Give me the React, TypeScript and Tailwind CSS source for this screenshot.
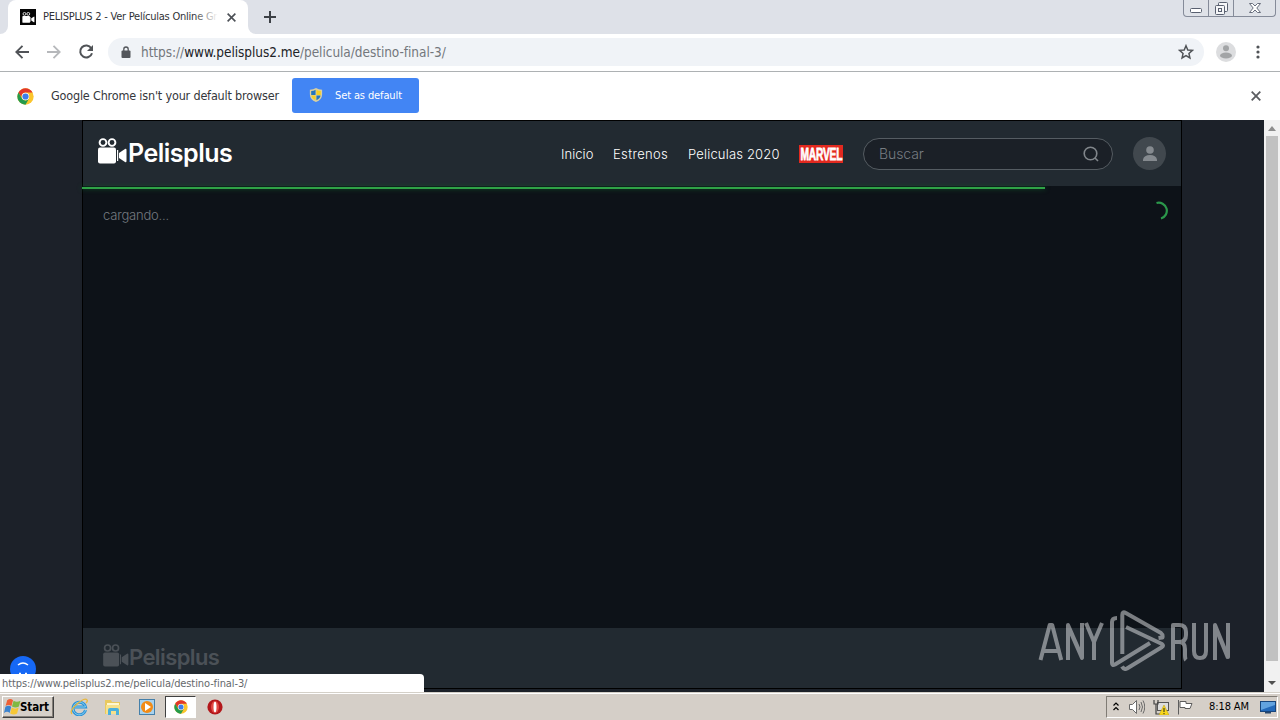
import * as React from "react";
import clsx from "clsx";

const PAGE_URL = "/pelicula/destino-final-3/";

const navLinks = [
  { label: "Inicio", className: "w-[32px] tracking-[0.05px]" },
  { label: "Estrenos", className: "w-[55px] tracking-[0.35px]" },
  { label: "Peliculas 2020", className: "w-[91px] tracking-[0.18px]" },
];

function CameraLogo({ className }: { className?: string }) {
  return (
    <svg viewBox="0 0 29 26" className={className} fill="currentColor">
      <circle cx="5" cy="4.5" r="3.4" fill="none" stroke="currentColor" strokeWidth="1.9" />
      <circle cx="14" cy="4.5" r="3.4" fill="none" stroke="currentColor" strokeWidth="1.9" />
      <rect x="0" y="9.5" width="18" height="16" rx="2" />
      <path d="M19 12h1.200v11H19zM21 15l6-4q1.500-.7 1.500 1v11q0 1.700-1.500 1l-6-4z" />
    </svg>
  );
}

function ChromeLogo({ className }: { className?: string }) {
  return (
    <svg viewBox="0 0 48 48" className={className}>
      <circle cx="24" cy="24" r="23" fill="#fbc52d" />
      <path d="M4.100 12.500A23 23 0 0 1 43.900 12.500H24A11.500 11.500 0 0 0 14 29.800Z" fill="#e2372b" />
      <path d="M4.100 12.500A23 23 0 0 0 24 47L34 29.800A11.500 11.500 0 0 1 14 29.800Z" fill="#249b4c" />
      <circle cx="24" cy="24" r="10.500" fill="#fff" />
      <circle cx="24" cy="24" r="8.800" fill="#3d7ce9" />
    </svg>
  );
}

function CloseIcon({ className }: { className?: string }) {
  return (
    <svg viewBox="0 0 10 10" className={className} fill="none" stroke="currentColor" strokeWidth="1.8">
      <path d="m.7.7 8.600 8.600M9.300.7.700 9.300" />
    </svg>
  );
}

function WindowControls() {
  return (
    <div className="flex h-[17px] w-[93px] rounded-b border border-t-0 border-[#858b99] bg-[#dfe2e8] text-[#596070]">
      <div className="flex w-[25px] justify-center border-r border-[#858b99] pt-2">
        <svg viewBox="0 0 12 5" className="h-[5px] w-3" fill="#fff" stroke="currentColor">
          <rect x=".5" y=".5" width="11" height="4" rx="1" />
        </svg>
      </div>
      <div className="flex w-[25px] justify-center border-r border-[#858b99] pt-0.5">
        <svg viewBox="0 0 13 13" className="size-[13px]" fill="#f5f6f8" stroke="currentColor">
          <rect x="3.500" y=".5" width="9" height="9" rx="1" />
          <rect x=".5" y="3.500" width="9" height="9" rx="1" />
          <rect x="3.500" y="6.500" width="3" height="3" />
        </svg>
      </div>
      <div className="flex flex-1 justify-center pt-[3px]">
        <svg viewBox="0 0 12 10" className="h-2.5 w-3" fill="#fff" stroke="currentColor" strokeWidth=".9">
          <path d="M.5.5h3L6 3 8.500.5h3L7.800 5l3.700 4.500h-3L6 7 3.500 9.500h-3L4.200 5z" />
        </svg>
      </div>
    </div>
  );
}

function TabStrip() {
  return (
    <div className="flex h-[34px] items-start bg-[#dee1e8]">
      <div className="flex h-full w-2 items-end bg-white">
        <div className="h-full w-2 rounded-br-lg bg-[#dee1e8]" />
      </div>
      <div className="flex h-[34px] w-60 items-center rounded-t-lg bg-white pl-3">
        <div className="flex size-4 shrink-0 items-center justify-center bg-[#050505] text-white">
          <CameraLogo className="h-[11px] w-[13px]" />
        </div>
        <div className="relative ml-[7px] w-[175px] pt-px text-[11px] tracking-[-0.23px] whitespace-nowrap text-[#303236]">
          PELISPLUS 2 - Ver Películas Online Gr
          <div className="absolute inset-y-0 right-0 w-5 bg-gradient-to-r from-white/20 to-white" />
        </div>
        <CloseIcon className="ml-[9px] size-[9px] shrink-0 text-[#4c5056]" />
      </div>
      <div className="h-full w-2 bg-white">
        <div className="h-full w-2 rounded-bl-lg bg-[#dee1e8]" />
      </div>
      <svg viewBox="0 0 12 12" className="mt-[11px] ml-2 size-3" stroke="#3c4046" strokeWidth="2">
        <path d="M6 0v12M0 6h12" />
      </svg>
      <div className="mr-[4px] ml-auto">
        <WindowControls />
      </div>
    </div>
  );
}

function Toolbar() {
  return (
    <div className="flex h-[38px] items-center border-b border-[#adb1b3] bg-white pb-px pl-[15px]">
      <svg viewBox="0 0 14 14" className="size-3.5" fill="none" stroke="#505357" strokeWidth="1.9">
        <path d="M14 7H1.500M7.500.800 1.300 7l6.200 6.200" />
      </svg>
      <svg viewBox="0 0 14 14" className="ml-[18px] size-3.5" fill="none" stroke="#b6b8bb" strokeWidth="1.8">
        <path d="M0 7h12.500M6.500.800 12.700 7l-6.200 6.200" />
      </svg>
      <svg viewBox="0 0 16 16" className="ml-[17px] size-4" fill="none" stroke="#505357" strokeWidth="2">
        <path d="M13.300 4.200A6 6 0 1 0 14 9.200" />
        <path d="M15 1v6H9z" fill="#505357" stroke="none" />
      </svg>
      <div className="ml-3.5 flex h-7 w-[1096px] items-center rounded-full bg-[#f0f3f7] pr-2.5 pl-[13px]">
        <svg viewBox="0 0 10 12" className="h-3 w-2.5" fill="#53565b">
          <rect x=".5" y="4.500" width="9" height="7.500" rx="1" />
          <path d="M2.800 5V3.200a2.200 2.200 0 0 1 4.400 0V5" fill="none" stroke="#53565b" strokeWidth="1.300" />
        </svg>
        <div className="ml-2.5 text-[13.5px] tracking-[-0.05px] text-[#73777c]">
          https://<span className="text-[#202226]">www.pelisplus2.me</span>
          {PAGE_URL}
        </div>
        <svg viewBox="0 0 24 24" className="ml-auto size-4" fill="none" stroke="#505357" strokeWidth="2.200">
          <path d="m12 2.500 2.700 6.400 6.900.6-5.200 4.600 1.500 6.800-5.900-3.600-5.900 3.600 1.500-6.800-5.200-4.600 6.900-.6z" />
        </svg>
      </div>
      <svg viewBox="0 0 20 20" className="ml-3 size-5">
        <circle cx="10" cy="10" r="10" fill="#dcdddf" />
        <circle cx="10" cy="6.300" r="3" fill="#a2a4a6" />
        <ellipse cx="10" cy="13.500" rx="6" ry="3" fill="#a2a4a6" />
      </svg>
      <svg viewBox="0 0 4 14" className="ml-5 h-3.5 w-1" fill="#505357">
        <circle cx="2" cy="2" r="1.600" />
        <circle cx="2" cy="7" r="1.600" />
        <circle cx="2" cy="12" r="1.600" />
      </svg>
    </div>
  );
}

function InfoBar() {
  return (
    <div className="flex h-12 items-center bg-white pl-[17px]">
      <ChromeLogo className="size-[17px]" />
      <div className="ml-[17px] w-[229px] text-[12.5px] tracking-[-0.18px] whitespace-nowrap text-[#35373b]">
        Google Chrome isn't your default browser
      </div>
      <div className="-mt-0.5 ml-3 flex h-[35px] w-[127px] items-center rounded-[3px] bg-[#4285f4] pl-[17px] text-[11px] tracking-[-0.12px] text-white">
        <svg viewBox="0 0 16 16" className="mr-3 size-3.5">
          <path d="M8 0q3 2 7 2v5q0 6-7 9-7-3-7-9V2q4 0 7-2" fill="#dad0a0" />
          <path d="M7.500 2v6H2.500V3.500q3 0 5-1.500M8.500 8.500h4.700q-.5 3.500-4.700 5.500z" fill="#2475bd" />
          <path d="M8.500 2q2 1.500 5 1.500v4.500h-5zM7.500 8.500v5.500q-4.200-2-4.800-5.500z" fill="#f5ce23" />
        </svg>
        <span className="pt-0.5">Set as default</span>
      </div>
      <CloseIcon className="mr-[19px] ml-auto size-2.5 text-[#5b5d61]" />
    </div>
  );
}

function Brand({ small }: { small?: boolean }) {
  return (
    <div className={clsx("flex items-end", small ? "text-[#4b5157]" : "text-white")}>
      <CameraLogo className={small ? "h-[23px] w-[26px]" : "h-[26px] w-[29px]"} />
      <span
        className={clsx(
          "relative top-px font-['Inter'] font-semibold",
          small
            ? "text-[22px] leading-[22px] tracking-[-0.6px]"
            : "ml-px text-[25px] leading-[24px] tracking-[-0.5px]",
        )}
      >
        Pelisplus
      </span>
    </div>
  );
}

function MarvelBadge() {
  return (
    <svg viewBox="0 0 44 18" className="h-[18px] w-11">
      <rect width="44" height="18" fill="#e3291f" />
      <text
        x="0"
        y="0"
        transform="translate(1.5 15) scale(.6 1)"
        fontFamily="Liberation Sans"
        fontWeight="700"
        fontSize="17"
        letterSpacing="-.3"
        fill="#fff"
        stroke="#fff"
        strokeWidth=".8"
      >
        MARVEL
      </text>
    </svg>
  );
}

function SiteHeader() {
  return (
    <header className="flex h-[65px] items-center bg-[#222a31] pl-[15px] font-['Inter'] text-white">
      <div className="-mt-1.5">
        <Brand />
      </div>
      <nav className="ml-auto flex items-center gap-5 text-[13px] font-light">
        {navLinks.map((link) => (
          <a key={link.label} className={clsx("pt-0.5 whitespace-nowrap", link.className)}>
            {link.label}
          </a>
        ))}
        <MarvelBadge />
      </nav>
      <div className="ml-5 flex h-8 w-[250px] items-center rounded-full border border-[#555c62] bg-[#1b2027] pr-[13px] pl-[15px] text-[14px] font-light text-[#777c82]">
        <span className="tracking-[-0.1px]">Buscar</span>
        <svg viewBox="0 0 16 16" className="ml-auto size-4" fill="none" stroke="#81868b" strokeWidth="1.600">
          <circle cx="7.500" cy="7.500" r="6.300" />
          <path d="m12 12 3 3" />
        </svg>
      </div>
      <div className="mr-[15px] ml-5 flex size-[33px] items-center justify-center rounded-full bg-[#41484e]">
        <svg viewBox="0 0 14 16" className="h-4 w-3.5" fill="#858a8f">
          <circle cx="7" cy="4" r="3.800" />
          <path d="M0 15v-1.500Q1 9 7 9t7 4.500V15z" />
        </svg>
      </div>
    </header>
  );
}

function AnyRunWatermark() {
  return (
    <svg viewBox="0 0 194 64" className="absolute top-[489px] left-[1038px] h-16 w-[194px]" opacity=".55">
      <g fill="none" stroke="#d5d7da" strokeWidth="4" strokeLinejoin="round">
        <path d="M2.500 51 11.700 16h2.500l9 35M5.500 42h15" />
        <path d="M30 51V16l14 32V14M30 17l14 32V14" />
        <path d="m48 14 8 19v18M64 14l-8 19" />
        <path d="M79 9q-5 0-5 4v41q0 3 3 1.500L112 34M84.300 45V6q0-4 3.500-2L123 24q2 1.500 1.500 4.500l-4 .5M88 18l36 17q2 1.500 0 3L89 59.500q-3 1.500-5-2" />
        <path d="M135 51V16h6q7 0 7 7v3q0 7-7 7h-6M141 33q6 0 6 7v6q0 4 1 5" />
        <path d="M156 14v28q0 7 6 7t6-7V14" />
        <path d="M177 51V16l13 32V14M177 17l13 32" />
      </g>
    </svg>
  );
}

function WebPage() {
  return (
    <div className="relative flex h-[572px] overflow-hidden bg-[#1c2129]">
      <div className="ml-[82px] flex h-[569px] w-[1100px] flex-col border border-black">
        <SiteHeader />
        <main className="relative flex flex-1 items-start justify-between bg-[#0d1218] px-5 pt-[19px]">
          <div className="absolute top-px -left-px h-0.5 w-[963px] bg-[#2fa346] shadow-[0_0_5px_#105a2a]" />
          <p className="font-['Inter'] text-[13px] leading-5 font-light tracking-[-0.2px] text-[#757a80]">
            cargando...
          </p>
          <svg viewBox="0 0 20 20" className="-mt-[4px] -mr-[7px] size-5" fill="none">
            <path d="M8.500 2a8 8 0 0 1 4.500 15.500" stroke="#2b984b" strokeWidth="2.200" />
          </svg>
        </main>
        <footer className="flex h-[60px] items-start bg-[#222a31] pt-4 pl-5">
          <Brand small />
        </footer>
      </div>
      <div className="ml-auto flex w-4 flex-col items-center bg-[#f1f1f1]">
        <svg viewBox="0 0 16 16" className="size-4" fill="#8d8d8d">
          <path d="m4 11 4-5 4 5z" />
        </svg>
        <div className="h-[525px] w-3 bg-[#c1c1c1]" />
        <svg viewBox="0 0 16 16" className="mt-auto size-4" fill="#505050">
          <path d="m4 5 4 4 4-4z" />
        </svg>
      </div>
      <div className="absolute top-[536px] left-[10px] flex size-[26px] justify-center rounded-full bg-[#1668f5] pt-[6px]">
        <svg viewBox="0 0 12 12" className="size-3" fill="none" stroke="#fff" strokeWidth="1.500">
          <path d="M1 3q5-4 10 0M2 11.500h2M8 11.500h2" />
        </svg>
      </div>
      <AnyRunWatermark />
      <div className="absolute bottom-0 left-0 h-[18px] w-[424px] rounded-tr bg-white pl-[2px] text-[11px] leading-[19px] tracking-[-0.1px] text-[#65686c]">
        https://www.pelisplus2.me{PAGE_URL}
      </div>
    </div>
  );
}

function WindowsFlag() {
  return (
    <svg viewBox="0 0 16 16" className="size-[17px] shrink-0">
      <path d="M3 2q3-2 5.500 0L7 7.500q-3-2-5.500 0z" fill="#ee6035" />
      <path d="M9 2.500q3 2 6.500 0L14 8q-3 2-6.500 0z" fill="#80b943" />
      <path d="M1.300 8.300q3-2 5.500 0L5.300 14Q3 12 0 14z" fill="#3b83cf" />
      <path d="M7.300 9q3 2 6.500 0l-1.500 5.500q-3 2-6.500 0z" fill="#f6c735" />
    </svg>
  );
}

function Taskbar() {
  return (
    <div className="flex h-7 items-center border-t border-[#d4d0c8] bg-[#d5cfc8] shadow-[inset_0_1px_#fff]">
      <div className="ml-0.5 flex h-[22px] w-[52px] items-center border border-r-[#404040] border-b-[#404040] border-t-white border-l-white pl-px text-[11.5px] font-bold tracking-[-0.1px] text-black shadow-[inset_-1px_-1px_#858079]">
        <WindowsFlag />
        <span className="-ml-px pt-0.5">Start</span>
      </div>
      <svg viewBox="0 0 18 18" className="ml-4 size-[18px]" fill="none">
        <path d="M15.500 12A6.300 6.300 0 1 1 15.500 9H5" stroke="#2992d8" strokeWidth="3" />
        <path d="M15.500 12A6.300 6.300 0 1 1 15.500 9H5" stroke="#8bd0ef" strokeWidth="1" />
        <path d="M2 16Q-1 13 7 6t10-4q1 1-1 3" stroke="#e8b83d" strokeWidth="1.300" />
      </svg>
      <svg viewBox="0 0 18 18" className="ml-4 size-[18px]">
        <path d="M1 4V2h6l1 2h8v12H1z" fill="#e9c95e" />
        <path d="M3 5h12v4H3z" fill="#fff7cf" />
        <path d="M2 7h14v9H2z" fill="#f6e18b" />
        <path d="M4 17v-5q0-2 2-2h7q2 0 2 2v5h-3v-4H7v4z" fill="#4bb0dc" />
      </svg>
      <svg viewBox="0 0 16 16" className="ml-[17px] size-4">
        <rect x=".5" y=".5" width="15" height="15" fill="#a8d2ee" stroke="#4580aa" />
        <circle cx="8" cy="8" r="6" fill="#f28b16" />
        <path d="m6 4 6 4-6 4z" fill="#fff" />
      </svg>
      <div className="ml-2.5 flex h-[22px] w-[31px] items-center justify-center border border-t-[#404040] border-r-white border-b-white border-l-[#404040] bg-white">
        <ChromeLogo className="size-3.5" />
      </div>
      <svg viewBox="0 0 16 16" className="ml-[11px] size-4">
        <circle cx="8" cy="8" r="7.600" fill="#b3171b" />
        <ellipse cx="8" cy="8" rx="4" ry="6" fill="#e14a45" />
        <ellipse cx="8" cy="8" rx="1.500" ry="5.300" fill="#fff" />
      </svg>
      <div className="mr-0.5 ml-auto flex h-[22px] w-[172px] items-center border border-t-[#807c75] border-r-white border-b-white border-l-[#807c75] pl-1.5">
        <svg viewBox="0 0 6 9" className="h-[9px] w-1.5" fill="none" stroke="#000" strokeWidth="1.200">
          <path d="M.5 3.500 3 1l2.500 2.500M.5 8 3 5.500 5.500 8" />
        </svg>
        <svg viewBox="0 0 16 16" className="ml-2.5 size-4" fill="none" stroke="#6a6a6a">
          <path d="M.5 5.500h3l4-4v13l-4-4h-3z" fill="#fff" />
          <path d="M10 5q2 3 0 6M12 3q3 5 0 10M14 1.500q3.500 6.500 0 13" />
        </svg>
        <svg viewBox="0 0 16 16" className="ml-2 size-4">
          <rect x="4.500" y="3.500" width="11" height="8" fill="#ddd" stroke="#555" />
          <path d="M1 1v4h4V1M3 5v10h5" fill="none" stroke="#444" strokeWidth="1.200" />
          <path d="m11 6 5 10H6z" fill="#f9d71c" stroke="#b79a10" strokeWidth=".5" />
          <path d="M11 9v4M11 14v1.200" stroke="#222" />
        </svg>
        <svg viewBox="0 0 16 16" className="ml-2 size-4" fill="#fff" stroke="#5d5d5d">
          <path d="M1.500 1v14.500M3 2.500h6v2h6l-2 5H8v-1H3z" />
        </svg>
        <span className="ml-[16px] w-[43px] pt-0.5 text-[11px] tracking-[-0.1px] whitespace-nowrap text-black">
          8:18 AM
        </span>
        <svg viewBox="0 0 16 14" className="ml-[8px] h-3.5 w-4 shrink-0">
          <rect x=".5" y="1.500" width="15" height="10" fill="#2369b9" stroke="#17457c" />
          <path d="M1 2h14v3L1 10z" fill="#62a3df" />
          <path d="M5 12h6v1.500H5z" fill="#28466b" />
        </svg>
      </div>
    </div>
  );
}

export default function App() {
  return (
    <div className="flex h-[720px] w-[1280px] flex-col overflow-hidden font-['DejaVu_Sans_Condensed','DejaVu_Sans',sans-serif] [font-stretch:condensed]">
      <TabStrip />
      <Toolbar />
      <InfoBar />
      <WebPage />
      <Taskbar />
    </div>
  );
}
